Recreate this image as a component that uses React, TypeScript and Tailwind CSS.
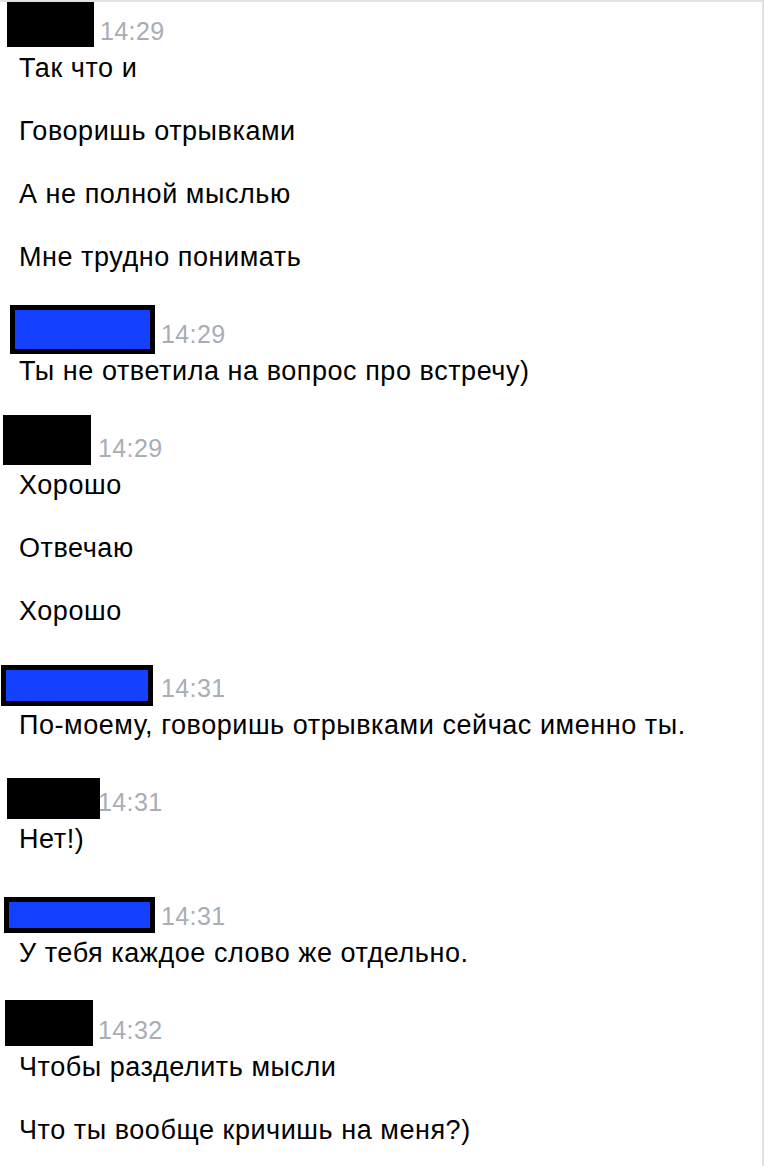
import React from "react"

type Group = {
  time: string
  timeClass: string
  boxClass: string
  lines: string[]
}

// redacted names are drawn as boxes over the header
const groups: Group[] = [
  {
    time: "14:29",
    timeClass: "pl-[100px]",
    boxClass: "left-[7px] top-[-5px] w-[87px] h-[45px] bg-black",
    lines: ["Так что и", "Говоришь отрывками", "А не полной мыслью", "Мне трудно понимать"],
  },
  {
    time: "14:29",
    timeClass: "pl-[161px]",
    boxClass: "left-[10px] top-[-5px] w-[145px] h-[49px] bg-[#1440ff] border-[5px] border-black",
    lines: ["Ты не ответила на вопрос про встречу)"],
  },
  {
    time: "14:29",
    timeClass: "pl-[98px]",
    boxClass: "left-[3px] top-[-9px] w-[88px] h-[50px] bg-black",
    lines: ["Хорошо", "Отвечаю", "Хорошо"],
  },
  {
    time: "14:31",
    timeClass: "pl-[161px]",
    boxClass: "left-[1px] top-[1px] w-[152px] h-[41px] bg-[#1440ff] border-[5px] border-black",
    lines: ["По-моему, говоришь отрывками сейчас именно ты."],
  },
  {
    time: "14:31",
    timeClass: "pl-[98px]",
    boxClass: "left-[7px] top-[0px] w-[93px] h-[41px] bg-black",
    lines: ["Нет!)"],
  },
  {
    time: "14:31",
    timeClass: "pl-[161px]",
    boxClass: "left-[4px] top-[5px] w-[151px] h-[36px] bg-[#1440ff] border-[5px] border-black",
    lines: ["У тебя каждое слово же отдельно."],
  },
  {
    time: "14:32",
    timeClass: "pl-[98px]",
    boxClass: "left-[5px] top-[-6px] w-[88px] h-[46px] bg-black",
    lines: ["Чтобы разделить мысли", "Что ты вообще кричишь на меня?)"],
  },
]

const MessageGroup = ({ group }: { group: Group }) => {
  return (
    <div className="flex flex-col pb-[40px]">
      <div className="relative h-[48px] flex items-center">
        <span className={`text-[25px] leading-none tracking-[0.4px] text-[#a8adb6] ${group.timeClass}`}>
          {group.time}
        </span>
        <div className={`absolute ${group.boxClass}`}></div>
      </div>
      <div className="flex flex-col gap-[37px] pl-[19px]">
        {group.lines.map((line, i) => (
          <div key={i} className="text-[27px] leading-[26px] tracking-[0.55px] text-black whitespace-nowrap">
            {line}
          </div>
        ))}
      </div>
    </div>
  )
}

const App = () => {
  return (
    <div
      className="w-[764px] h-[1166px] overflow-hidden bg-white border-t-2 border-r-2 border-[#e2e2e2] pt-[5px]"
      style={{ fontFamily: '"Liberation Sans", Arial, sans-serif' }}
    >
      {groups.map((group, i) => (
        <MessageGroup key={i} group={group} />
      ))}
    </div>
  )
}

export default App
